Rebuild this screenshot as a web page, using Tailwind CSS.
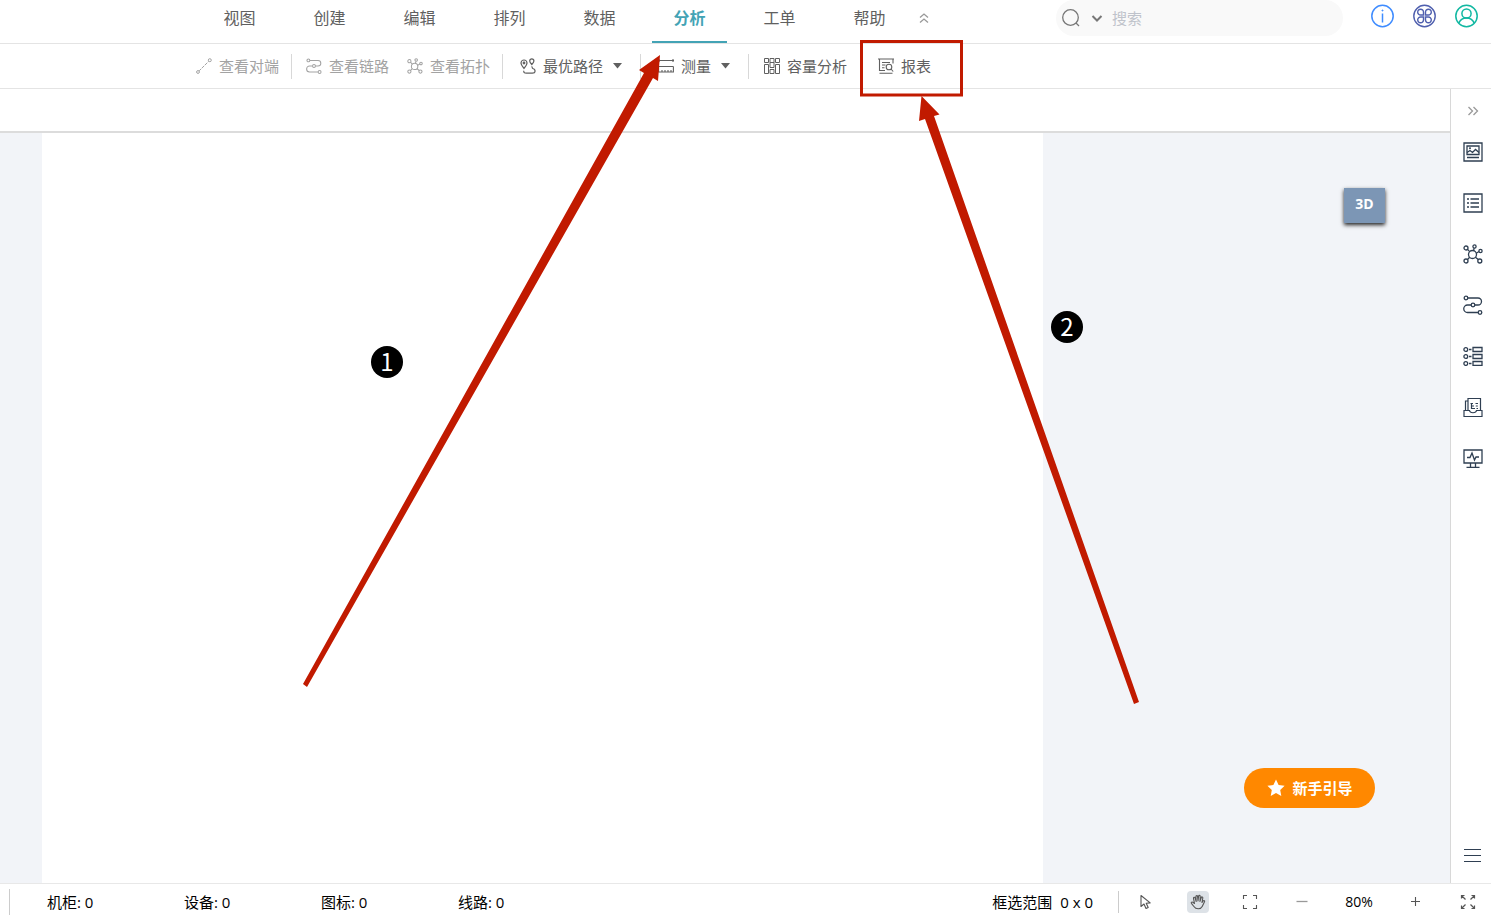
<!DOCTYPE html>
<html lang="zh-CN">
<head>
  <meta charset="UTF-8" />
  <meta name="viewport" content="width=device-width, initial-scale=1.0"/>
  <title>分析</title>
  <script src="https://cdn.jsdelivr.net/npm/@tailwindcss/browser@4"></script>
</head>
<body class="relative h-screen flex flex-col overflow-hidden bg-white font-['Open_Sans','Noto_Sans_CJK_SC',sans-serif] text-[15px] text-[#606060]">

  <!-- Menu bar -->
  <header class="h-11 shrink-0 flex items-start border-b border-[#e4e4e4] pl-[202px] pr-3">
    <nav class="flex gap-[15px] text-base leading-[37px]">
      <a href="#" class="w-[75px] h-[43px] text-center">视图</a>
      <a href="#" class="w-[75px] h-[43px] text-center">创建</a>
      <a href="#" class="w-[75px] h-[43px] text-center">编辑</a>
      <a href="#" class="w-[75px] h-[43px] text-center">排列</a>
      <a href="#" class="w-[75px] h-[43px] text-center">数据</a>
      <a href="#" class="w-[75px] h-[43px] text-center font-bold text-[#43a3b5] border-b-2 border-[#43a3b5]">分析</a>
      <a href="#" class="w-[75px] h-[43px] text-center">工单</a>
      <a href="#" class="w-[75px] h-[43px] text-center">帮助</a>
    </nav>
    <button aria-label="收起" class="h-9 w-5 ml-[7px] flex items-center justify-center text-[#999]">
      <svg class="w-3 h-3" viewBox="0 0 12 12" fill="none" stroke="currentColor" stroke-width="1.3"><path d="M2 5.500 6 2l4 3.500M2 10.500 6 7l4 3.500"/></svg>
    </button>

    <div class="ml-auto w-[287px] h-9 flex items-center rounded-full bg-[#f9f9f9] pl-[5px]">
      <svg class="w-5 h-5" viewBox="0 0 20 20" fill="none" stroke="#777" stroke-width="1.300"><circle cx="9.500" cy="9.500" r="7.800"/><path d="m15 15 3 3"/></svg>
      <svg class="w-3 h-3 ml-[10px]" viewBox="0 0 12 12" fill="none" stroke="#777" stroke-width="2"><path d="m1.500 4 4.500 4.500L10.500 4"/></svg>
      <input type="text" aria-label="搜索" placeholder="搜索" class="ml-[9px] w-[200px] bg-transparent outline-none placeholder:text-[#bfc3cb]"/>
    </div>

    <div class="flex gap-[18px] ml-7 pt-1">
      <button aria-label="信息">
        <svg class="w-6 h-6" viewBox="0 0 24 24" fill="none" stroke="#3f8cff" stroke-width="1.500"><circle cx="11.500" cy="12" r="10.700"/><path d="M11.500 9.500v9"/><circle cx="11.500" cy="6.500" r=".6" fill="#3f8cff" stroke-width=".8"/></svg>
      </button>
      <button aria-label="应用">
        <svg class="w-6 h-6" viewBox="0 0 24 24" fill="none" stroke="#4f5fae" stroke-width="1.400"><circle cx="11.500" cy="12" r="10.700"/><path d="M10.500 11H7.800A2.900 2.900 0 1 1 10.500 8.200zM12.500 11V8.200A2.900 2.900 0 1 1 15.200 11zM10.500 13v2.800A2.900 2.900 0 1 1 7.800 13zM12.500 13h2.700A2.900 2.900 0 1 1 12.500 15.800z"/></svg>
      </button>
      <button aria-label="用户">
        <svg class="w-6 h-6" viewBox="0 0 24 24" fill="none" stroke="#12b8a2" stroke-width="1.500"><circle cx="11.500" cy="12" r="10.700"/><circle cx="11.500" cy="9.500" r="4.600"/><path d="M3.800 19.300c1.200-3.300 3.700-5.200 7.700-5.200s6.500 1.900 7.700 5.200"/></svg>
      </button>
    </div>
  </header>

  <!-- Toolbar -->
  <div class="h-[45px] shrink-0 flex items-center border-b border-[#e4e4e4] pl-[187px] whitespace-nowrap">
    <button disabled class="flex items-center gap-[7px] px-[9px] text-[#a3a3a3]">
      <svg class="w-4 h-4" viewBox="0 0 16 16" fill="none" stroke="currentColor"><circle cx="2" cy="14" r="1.400"/><circle cx="13.800" cy="2.200" r="1.500"/><path d="m3.200 12.800 9.400-9.400" stroke-dasharray="3 1"/></svg>
      查看对端
    </button>
    <span class="w-px h-[25px] ml-[3px] mr-[5px] bg-[#d8d8d8]"></span>
    <button disabled class="flex items-center gap-[7px] px-[9px] text-[#a3a3a3]">
      <svg class="w-4 h-4" viewBox="0 0 20 20" fill="none" stroke="currentColor" stroke-width="1.300"><circle cx="3" cy="3" r="1.800"/><circle cx="10" cy="10" r="1.800"/><circle cx="17" cy="17.500" r="1.800"/><path d="M4.800 3H15a3.500 3.500 0 0 1 0 7h-3.200M8.200 10H4.500a3.700 3.700 0 0 0 0 7.500h10.700"/></svg>
      查看链路
    </button>
    <button disabled class="flex items-center gap-[7px] px-[9px] text-[#a3a3a3]">
      <svg class="w-4 h-4" viewBox="0 0 20 20" fill="none" stroke="currentColor" stroke-width="1.300"><circle cx="9.500" cy="10.500" r="4"/><circle cx="3" cy="4" r="2"/><circle cx="11.500" cy="2.500" r="1.600"/><circle cx="17.500" cy="7" r="1.600"/><circle cx="3" cy="17" r="2"/><circle cx="16.800" cy="17" r="2"/><path d="m4.500 5.400 2.200 2.200M11.200 4.100l-.7 2.500M16 7.500l-2.700 1.700M4.500 15.500l2.200-2.200M15.300 15.600l-2.900-2.400"/></svg>
      查看拓扑
    </button>
    <span class="w-px h-[25px] ml-[3px] mr-[5px] bg-[#d8d8d8]"></span>
    <button class="flex items-center gap-[7px] px-3">
      <svg class="w-4 h-4" viewBox="0 0 16 16" fill="none" stroke="currentColor" stroke-width="1.200"><path d="M4 10.500C2.300 8.300 1 6.700 1 5a3 3 0 0 1 6 0c0 1.700-1.300 3.300-3 5.500z"/><circle cx="4" cy="5" r=".8"/><path d="M11.800 6.500C10.500 5 9.700 4 9.700 2.900a2.100 2.100 0 0 1 4.200 0c0 1.100-.8 2.100-2.100 3.600z"/><path d="M11.500 8.500c1.200.3.300 1.600 1.300 2 3.200 1 3 4.700-.5 4.700H6.500c-2.600 0-3.200-1.300-2.500-2.500"/></svg>
      最优路径
      <svg class="w-[15px] h-4" viewBox="0 0 15 16" fill="currentColor"><path d="M3 5h9L7.500 10.500z"/></svg>
    </button>
    <span class="w-px h-[25px] ml-[3px] mr-[5px] bg-[#d8d8d8]"></span>
    <button class="flex items-center gap-[7px] px-3">
      <svg class="w-4 h-4" viewBox="0 0 16 16" fill="none" stroke="currentColor" stroke-width="1.100"><path d="M0 2.500h16M1 1v3M15 1v3M.6 8.500v5.500h14.800V8.500M.6 8.500h14.800M4 14v-2M7 14v-2M10 14v-2M13 14v-2"/></svg>
      测量
      <svg class="w-[15px] h-4" viewBox="0 0 15 16" fill="currentColor"><path d="M3 5h9L7.500 10.500z"/></svg>
    </button>
    <span class="w-px h-[25px] ml-[3px] mr-[5px] bg-[#d8d8d8]"></span>
    <button class="flex items-center gap-[7px] px-[10px]">
      <svg class="w-4 h-4" viewBox="0 0 16 16" fill="none" stroke="currentColor" stroke-width="1"><path d="M.5.500h4v4h-4zM.5 6.500h4v9h-4zM6 .5h4v9H6zM6 11.500h4v4H6zM11.500.5h4v4h-4zM11.500 6.500h4v9h-4zM6 4.500h4"/></svg>
      容量分析
    </button>
    <span class="w-px h-[25px] ml-[3px] mr-[5px] bg-[#d8d8d8]"></span>
    <button class="flex items-center gap-[7px] px-3">
      <svg class="w-4 h-4" viewBox="0 0 16 16" fill="none" stroke="currentColor" stroke-width="1.100"><path d="M7 12.500H1.500V1H15v4.500M0 1h16M4 4.500h8M4 7h3.500M4 9.700h2.500M1.500 15.200h13"/><circle cx="11" cy="9" r="2.800"/><path d="m13 11 2.200 2.500"/></svg>
      报表
    </button>
  </div>

  <!-- Workspace -->
  <main class="flex-1 min-h-0 flex">
    <section class="flex-1 flex flex-col">
      <div class="h-11 shrink-0 border-b-2 border-[#dcdcdc]"></div>
      <div class="relative flex-1 bg-[#f2f4f8] pl-[42px] pr-[407px]">
        <div class="h-full bg-white"></div>
        <button class="absolute top-[55px] right-[65px] w-[41px] h-[35px] pb-1 bg-[#7c96b5] text-white text-sm font-bold shadow-[0_2px_4px_#222]">3D</button>
        <button class="absolute bottom-[75px] right-[75px] w-[131px] h-10 flex items-center justify-center gap-[7px] rounded-full bg-[#ff8800] pl-px text-white font-bold">
          <svg class="w-[18px] h-[18px]" viewBox="0 0 18 18" fill="currentColor"><path d="m9 .5 2.600 5.500 6 .8-4.400 4.200 1.100 6L9 14.100 3.700 17l1.100-6L.4 6.800l6-.8z"/></svg>
          新手引导
        </button>
      </div>
    </section>

    <!-- Side panel -->
    <aside class="w-[41px] flex flex-col items-center border-l border-[#d8d8d8] pl-1 pt-[10px] text-[#2f3f52]">
      <button aria-label="展开" class="h-[23px] mb-1 text-[#999]">
        <svg class="w-3 h-3" viewBox="0 0 12 12" fill="none" stroke="currentColor" stroke-width="1.300"><path d="m1.500 2 4 4-4 4M6.500 2l4 4-4 4"/></svg>
      </button>
      <button aria-label="图片" class="h-[51px]">
        <svg class="w-5 h-5" viewBox="0 0 20 20" fill="none" stroke="currentColor" stroke-width="1.300"><path d="M1 1h18v18H1zM4 4h12v8.500H4zM4 15.500h12"/><path d="m4 10.500 3-2 2.500 2 3-3 3.500 3"/><circle cx="7" cy="6.200" r=".4"/></svg>
      </button>
      <button aria-label="列表" class="h-[51px]">
        <svg class="w-5 h-5" viewBox="0 0 20 20" fill="none" stroke="currentColor" stroke-width="1.300"><path d="M1 1h18v18H1zM7.500 6h8.500M7.500 10h8.500M7.500 14h8.500M4 6h2M4 10h2M4 14h2"/></svg>
      </button>
      <button aria-label="拓扑" class="h-[51px]">
        <svg class="w-5 h-5" viewBox="0 0 20 20" fill="none" stroke="currentColor" stroke-width="1.300"><circle cx="9.500" cy="10.500" r="4"/><circle cx="3" cy="4" r="2"/><circle cx="11.500" cy="2.500" r="1.600"/><circle cx="17.500" cy="7" r="1.600"/><circle cx="3" cy="17" r="2"/><circle cx="16.800" cy="17" r="2"/><path d="m4.500 5.400 2.200 2.200M11.200 4.100l-.7 2.500M16 7.500l-2.700 1.700M4.500 15.500l2.200-2.200M15.300 15.600l-2.900-2.400"/></svg>
      </button>
      <button aria-label="链路" class="h-[51px]">
        <svg class="w-5 h-5" viewBox="0 0 20 20" fill="none" stroke="currentColor" stroke-width="1.300"><circle cx="3" cy="3" r="1.800"/><circle cx="10" cy="10" r="1.800"/><circle cx="17" cy="17.500" r="1.800"/><path d="M4.800 3H15a3.500 3.500 0 0 1 0 7h-3.200M8.200 10H4.500a3.700 3.700 0 0 0 0 7.500h10.700"/></svg>
      </button>
      <button aria-label="端口" class="h-[51px]">
        <svg class="w-5 h-5" viewBox="0 0 20 20" fill="none" stroke="currentColor" stroke-width="1.300"><circle cx="2.800" cy="3.500" r="1.900"/><circle cx="2.800" cy="10.500" r="1.900"/><circle cx="2.800" cy="17.500" r="1.900"/><path d="M10 1.500h9v4h-9zM10 8.500h9v4h-9zM10 15.500h9v4h-9zM6 3.500h2.500M6 10.500h2.500M6 17.500h2.500"/></svg>
      </button>
      <button aria-label="文档" class="h-[51px]">
        <svg class="w-5 h-5" viewBox="0 0 20 20" fill="none" stroke="currentColor" stroke-width="1.200"><path d="M5 13.500v-12h12.500v12M5 4H2.500v9.500M1 13.500h5.500c.5 3 6.500 3 7 0H19v6H1zM7.500 6.500h2.500M8.500 6.500v5h3.500M8.500 9h2.500M12.500 6.500h2.500M12.800 9h2M13.500 11.500h1.500"/></svg>
      </button>
      <button aria-label="监控" class="h-[51px]">
        <svg class="w-5 h-5" viewBox="0 0 20 20" fill="none" stroke="currentColor" stroke-width="1.300"><path d="M1 2h18v13H1zM7.500 15v4M12.500 15v4M3.500 19.300h13"/><path d="M4 9.500h3L9 5l2.500 7L13 9h3"/></svg>
      </button>
      <button aria-label="菜单" class="mt-auto mb-[18px]">
        <svg class="w-5 h-5" viewBox="0 0 20 20" fill="none" stroke="currentColor" stroke-width="1.200"><path d="M1 4.500h17M1 10.500h17M1 16.500h17"/></svg>
      </button>
    </aside>
  </main>

  <!-- Status bar -->
  <footer class="h-[34px] shrink-0 flex items-center border-t border-[#e8e8e8] pl-[9px] pr-3 pt-[3px] text-black whitespace-nowrap">
    <span class="w-px h-[26px] mr-[37px] bg-[#ccc]"></span>
    <div class="flex">
      <span class="w-[137px]">机柜: 0</span>
      <span class="w-[137px]">设备: 0</span>
      <span class="w-[137px]">图标: 0</span>
      <span class="w-[137px]">线路: 0</span>
    </div>
    <div class="ml-auto flex gap-2"><span>框选范围</span><span>0 x 0</span></div>
    <span class="w-px h-[22px] ml-[25px] mr-4 bg-[#ccc]"></span>
    <div class="flex items-center gap-[30px] text-[#555]">
      <button aria-label="选择" class="w-[22px] h-[22px] flex items-center justify-center">
        <svg class="w-4 h-4" viewBox="0 0 16 16" fill="none" stroke="currentColor" stroke-width="1.100" stroke-linejoin="round"><path d="M3 1.500v11l3-2.500 2 4.500 2.200-1-2-4.300 4-.3z"/></svg>
      </button>
      <button aria-label="拖动" class="w-[22px] h-[22px] flex items-center justify-center rounded bg-[#dde2e7]">
        <svg class="w-4 h-4" viewBox="0 0 16 16" fill="none" stroke="currentColor" stroke-width="1.100" stroke-linecap="round" stroke-linejoin="round"><path d="M4.500 9.500 3.500 4.300c-.2-1.200 1.300-1.500 1.600-.4L6.200 7.500 5.900 2.600c0-1.300 1.600-1.300 1.700 0L8 7l.6-4.900c.2-1.100 1.700-1 1.600.2L10 7.400l1.300-3.900c.4-1.100 1.800-.6 1.500.5L12 8.500l1.200-1.600c.7-.9 1.900-.1 1.300.9l-2.300 4.600c-.8 1.600-2 2.400-4 2.400-2.200 0-3.300-.8-4.300-2.300L1.400 9.300c-.6-1 .7-1.800 1.500-1z"/></svg>
      </button>
      <button aria-label="框选" class="w-[22px] h-[22px] flex items-center justify-center">
        <svg class="w-4 h-4" viewBox="0 0 16 16" fill="none" stroke="currentColor" stroke-width="1.100"><path d="M1.500 5V1.500H5M11 1.500h3.500V5M14.500 11v3.500H11M5 14.500H1.500V11"/></svg>
      </button>
      <button aria-label="缩小" class="w-[22px] h-[22px] flex items-center justify-center text-[#999]">
        <svg class="w-3 h-3" viewBox="0 0 12 12" fill="none" stroke="currentColor" stroke-width="1.300"><path d="M.5 5.500h11"/></svg>
      </button>
      <span class="w-8 text-center text-sm text-black">80%</span>
      <button aria-label="放大" class="w-[22px] h-[22px] flex items-center justify-center">
        <svg class="w-3 h-3" viewBox="0 0 12 12" fill="none" stroke="currentColor" stroke-width="1.100"><path d="M1 5.500h9M5.500 1v9"/></svg>
      </button>
      <button aria-label="全屏" class="w-[22px] h-[22px] flex items-center justify-center">
        <svg class="w-4 h-4" viewBox="0 0 16 16" fill="none" stroke="currentColor" stroke-width="1.200"><path d="M1.500 4.500v-3h3M1.500 1.500l4 4M11.500 1.500h3v3M14.500 1.500l-4 4M14.500 11.500v3h-3M14.500 14.500l-4-4M4.500 14.500h-3v-3M1.500 14.500l4-4"/></svg>
      </button>
    </div>
  </footer>

  <!-- Step annotations -->
  <div class="absolute inset-0 pointer-events-none font-['Noto_Sans_CJK_SC',sans-serif]">
    <svg class="absolute top-0 left-0 w-[1491px] h-[917px]" viewBox="0 0 1491 917" fill="#c11a00">
      <path d="M660 55 639 70 644 73 303 684 307 687 653 78 658 81z"/>
      <path d="M921.500 96 919 121 925 119 1134 704 1139 702 934 116 939.500 114.500z"/>
      <rect x="861.500" y="41.500" width="100" height="53.500" fill="none" stroke="#c11a00" stroke-width="3"/>
    </svg>
    <span class="absolute left-[371px] top-[346px] w-8 h-8 rounded-full bg-black text-white text-2xl leading-[29px] text-center">1</span>
    <span class="absolute left-[1051px] top-[311px] w-8 h-8 rounded-full bg-black text-white text-2xl leading-[29px] text-center">2</span>
  </div>
</body>
</html>
